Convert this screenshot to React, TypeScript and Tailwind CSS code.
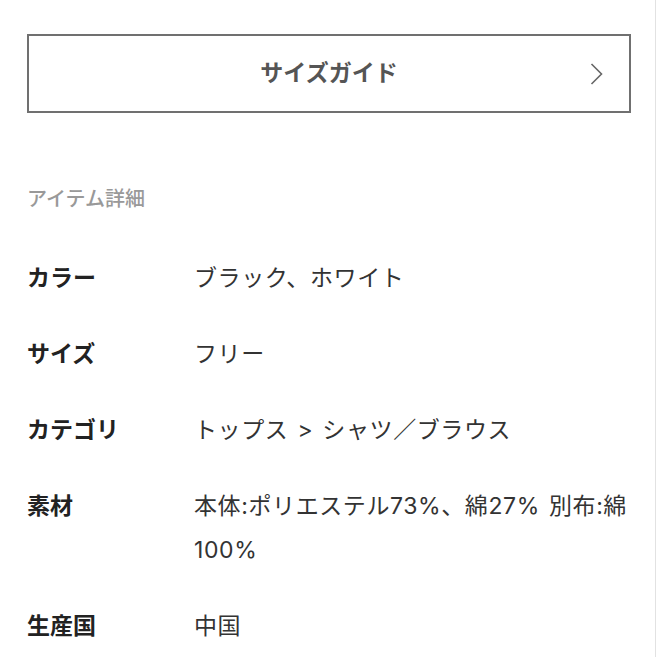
import React from 'react';

const rows: { label: string; value: string }[] = [
  { label: 'カラー', value: 'ブラック、ホワイト' },
  { label: 'サイズ', value: 'フリー' },
  { label: 'カテゴリ', value: 'トップス > シャツ／ブラウス' },
  { label: '素材', value: '本体:ポリエステル73%、綿27% 別布:綿100%' },
  { label: '生産国', value: '中国' },
];

function Chevron() {
  return (
    <svg width="13" height="23" viewBox="0 0 13 23" fill="none" className="text-[#666]">
      <path d="M1.5 1.5 L11.5 11.5 L1.5 21.5" stroke="currentColor" strokeWidth="1.6" />
    </svg>
  );
}

export default function App() {
  return (
    <div
      className="w-[657px] h-[657px] bg-white overflow-hidden"
      style={{ fontFamily: 'Inter, "Noto Sans CJK JP", "Noto Sans", sans-serif' }}
    >
      <div className="w-[656px] h-full border-r border-[#e2e2e2] pl-[27px] pt-[34px]">
        <button className="relative w-[604px] h-[79px] border-2 border-[#707070] flex items-center justify-center bg-white">
          <span className="text-[23px] font-bold text-[#555]">サイズガイド</span>
          <span className="absolute right-[26px] top-1/2 -translate-y-1/2 flex">
            <Chevron />
          </span>
        </button>

        <h2 className="mt-[72px] text-[20px] leading-[28px] font-medium text-[#999]">アイテム詳細</h2>

        <dl className="mt-[43px] flex flex-col gap-[32px]">
          {rows.map((r) => (
            <div key={r.label} className="flex">
              <dt className="w-[167px] shrink-0 text-[23px] leading-[44px] font-bold text-[#222]">{r.label}</dt>
              <dd className="w-[440px] text-[23px] leading-[44px] text-[#333] tracking-[0.6px] [word-spacing:2px]">
                {r.value}
              </dd>
            </div>
          ))}
        </dl>
      </div>
    </div>
  );
}
